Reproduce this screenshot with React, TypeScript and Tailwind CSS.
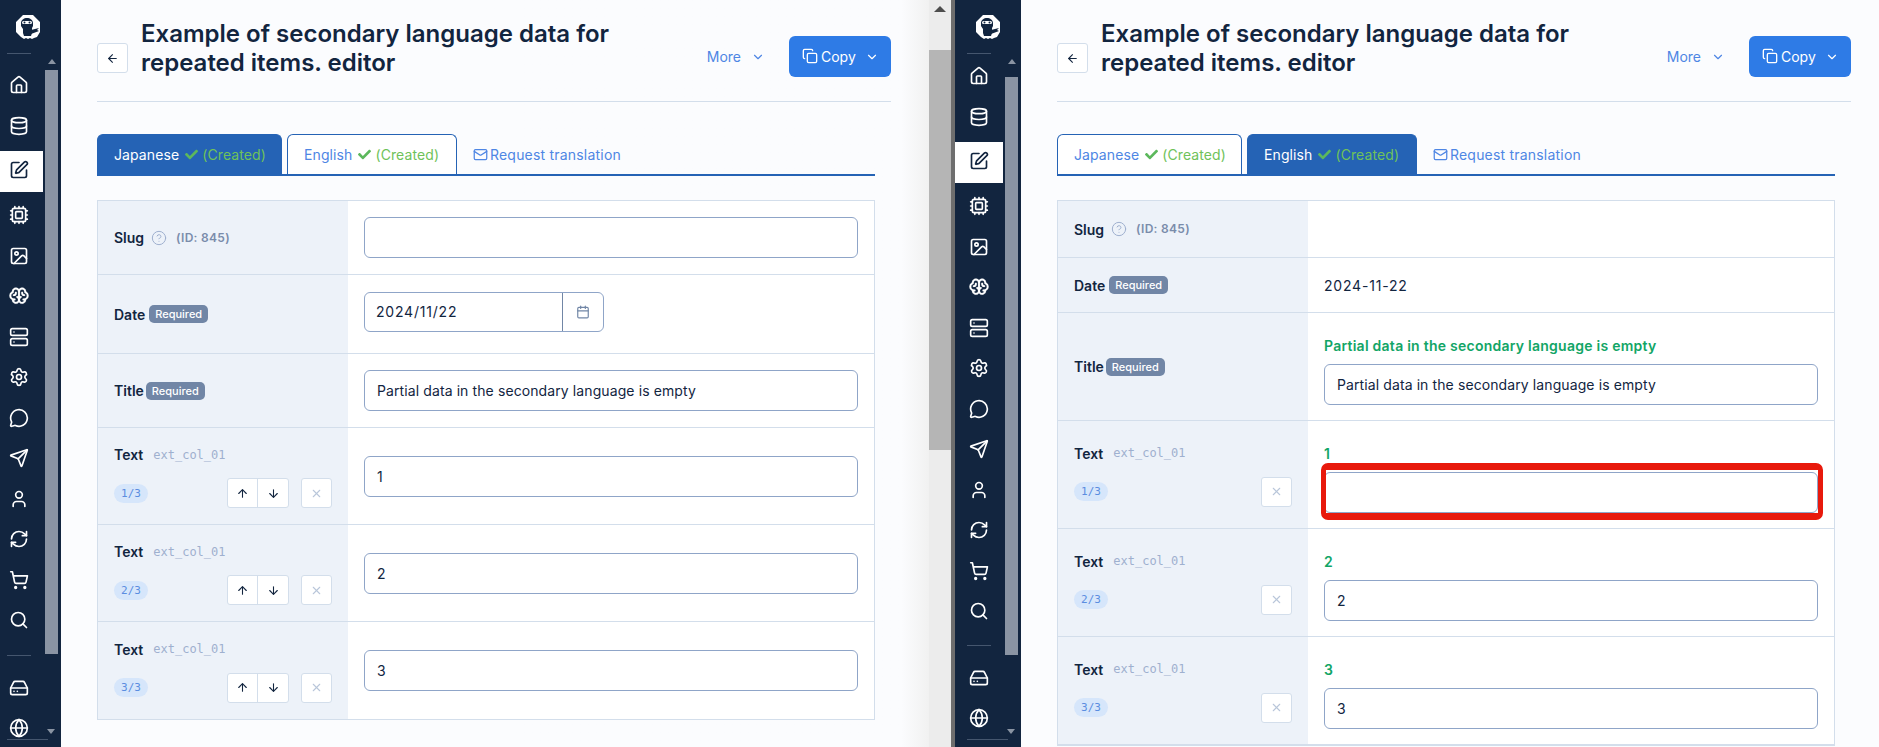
import { ArrowDown, ArrowLeft, ArrowUp, Calendar, ChevronDown, CircleHelp, Copy, Cpu, Database, Globe, HardDrive, House, Image, Mail, MessageCircle, RefreshCw, Search, Send, Server, Settings, ShoppingCart, SquarePen, User, X } from "lucide-react";
import { FaCheck } from "react-icons/fa";
import { PiBrainBold } from "react-icons/pi";
import type { ReactNode } from "react";

const navIcons = [House, Database, SquarePen, Cpu, Image, PiBrainBold, Server, Settings, MessageCircle, Send, User, RefreshCw, ShoppingCart, Search];

function Logo() {
  return (
    <svg viewBox="0 0 24 24" className="h-6 w-6">
      <path d="M7 0h10l7 7v10l-3 5-3 1-2 1-2-1-2 1-2-1-2 1-3-2-5-5V7z" fill="#fff" />
      <path d="M5 8c0-3 3-5 6-5s6 2 6 5v3l-1 2v5l-1 3H8l-1-3v-4l-2-3z" fill="#12253f" />
      <rect x="6" y="6" width="10" height="3" rx="1.5" fill="#fff" />
      <circle cx="8.5" cy="7.5" r="1" fill="#12253f" />
      <circle cx="13.5" cy="7.5" r="1" fill="#12253f" />
      <path d="M15 15l8-2-2 2 2 1-8 3z" fill="#12253f" />
    </svg>
  );
}

function Sidebar({ wide, active }: { wide: boolean; active: number }) {
  return (
    <div className={`flex h-full shrink-0 flex-col bg-[#12253f] ${wide ? "w-[66px]" : "w-[61px]"}`}>
      <div className="flex h-[54px] shrink-0 flex-col">
        <div className={`flex h-[53px] items-center ${wide ? "pl-[21px]" : "pl-[16px]"}`}>
          <Logo />
        </div>
        <div className={`h-px w-6 bg-[#45566e] ${wide ? "ml-3" : "ml-[7px]"}`} />
      </div>
      <div className="flex h-[601px] shrink-0">
        <div className={`flex flex-col overflow-hidden ${wide ? "w-[48px] pt-[2px]" : "w-[43px] pt-[11px]"}`}>
          {navIcons.map((Icon, i) => (
            <div
              key={i}
              className={`flex shrink-0 items-center justify-center ${i === active ? "mt-[5px] mb-[3px] h-[41px] bg-white pb-[3px] text-[#12253f]" : "h-[40.5px] text-white"} ${wide ? "pl-0" : "pr-[5px]"}`}
            >
              <Icon size={20} strokeWidth={2} />
            </div>
          ))}
        </div>
        <div className="ml-[2px] flex w-[13px] flex-col items-center">
          <div className="mt-[5px] h-0 w-0 border-x-[4px] border-b-[5px] border-x-transparent border-b-[#8a94a3]" />
          <div className={`w-full bg-[#8a94a3] ${wide ? "mt-[13px] h-[584px]" : "mt-[6px] h-[584px]"}`} />
        </div>
      </div>
      <div className="relative flex flex-1 flex-col">
        <div className={`h-px w-6 bg-[#45566e] ${wide ? "ml-3 -mt-[10px]" : "ml-[7px]"}`} />
        <div className={`flex h-[40px] items-center justify-center ${wide ? "mt-[12px] w-[48px]" : "mt-[12px] w-[38px]"}`}>
          <HardDrive size={20} className="text-white" />
        </div>
        <div className={`flex h-[40px] items-center justify-center ${wide ? "w-[48px]" : "w-[38px]"}`}>
          <Globe size={20} className="text-white" />
        </div>
        <div className={`absolute h-0 w-0 border-x-[4px] border-t-[5px] border-x-transparent border-t-[#8a94a3] ${wide ? "left-[52px]" : "left-[47px]"} top-[74px]`} />
        <div className={`absolute top-[84px] h-px w-[41px] bg-[#45566e] ${wide ? "left-3" : "left-[7px]"}`} />
      </div>
    </div>
  );
}

function Badge({ gap = "ml-[4px]" }: { gap?: string }) {
  return <span className={`rounded-[5px] bg-[#7186a6] px-[6px] py-[2px] text-[11px] leading-[14px] font-medium text-white ${gap}`}>Required</span>;
}

function Label({ name, children }: { name: string; children?: ReactNode }) {
  return (
    <div className="flex items-center">
      <span className="text-[14px] font-semibold text-[#12253f]">{name}</span>
      {children}
    </div>
  );
}

function Input({ value = "", className = "h-[41px]" }: { value?: string; className?: string }) {
  return (
    <div className={`flex w-full items-center rounded-md border border-[#8fa5c8] bg-white px-[12px] text-[14px] tracking-[0.1px] text-[#12253f] ${className}`}>
      {value}
    </div>
  );
}

function Row({ height, last, left, children }: { height: string; last?: boolean; left: ReactNode; children: ReactNode }) {
  return (
    <div className={`flex ${height} ${last ? "" : "border-b border-[#d3deeb]"}`}>
      <div className="flex w-[250px] shrink-0 flex-col justify-center bg-[#edf2f9] px-4">{left}</div>
      <div className="flex min-w-0 flex-1 flex-col justify-center bg-white pr-[16px] pl-4">{children}</div>
    </div>
  );
}

function TextLeft({ index, arrows }: { index: number; arrows: boolean }) {
  return (
    <>
      <div className="flex items-center">
        <span className="text-[14px] font-semibold text-[#12253f]">Text</span>
        <span className="ml-[10px] font-['DejaVu_Sans_Mono',monospace] text-[12px] text-[#9fb0cf]">ext_col_01</span>
      </div>
      <div className="mt-[13px] flex items-center">
        <span className="rounded-full bg-[#d6e6fb] px-[7px] py-[2px] font-['DejaVu_Sans_Mono',monospace] text-[11px] leading-[15px] text-[#5b8de0]">{index}/3</span>
        {arrows && (
          <div className="ml-auto flex h-[30px] rounded-[3px] border border-[#d3deeb] bg-white">
            <div className="flex w-[30px] items-center justify-center border-r border-[#d3deeb]"><ArrowUp size={13} className="text-[#12253f]" /></div>
            <div className="flex w-[30px] items-center justify-center"><ArrowDown size={13} className="text-[#12253f]" /></div>
          </div>
        )}
        <div className={`flex h-[30px] w-[31px] items-center justify-center rounded-[3px] border border-[#d3deeb] bg-white ${arrows ? "ml-3" : "ml-auto"}`}>
          <X size={13} className="text-[#b9c6da]" />
        </div>
      </div>
    </>
  );
}

function Tab({ name, active, width }: { name: string; active: boolean; width: string }) {
  return (
    <div className={`flex h-[40px] items-center rounded-t-md border border-b-0 border-[#2563b5] pl-4 text-[14px] tracking-[0.1px] ${width} ${active ? "bg-[#2563b5] text-white" : "bg-white text-[#4e86e4]"}`}>
      {name}
      <FaCheck size={13} className="mr-[4px] ml-[6px] text-[#5cb85c]" />
      <span className="text-[#6fc25a]">(Created)</span>
    </div>
  );
}

function Header() {
  return (
    <div className="flex h-[102px] items-center border-b border-[#d3deeb]">
      <div className="flex h-full w-full items-center pb-[8px]">
        <div className="mt-[23px] flex h-[30px] w-[31px] shrink-0 items-center justify-center rounded-[3px] border border-[#d3deeb] bg-white">
          <ArrowLeft size={13} className="text-[#12253f]" />
        </div>
        <h1 className="mt-[2px] ml-[13px] w-[490px] text-[24px] leading-[29px] font-semibold text-[#12253f]">Example of secondary language data for repeated items. editor</h1>
        <div className="mt-[19px] ml-auto flex items-center text-[14px] text-[#4e86e4]">
          More
          <ChevronDown size={14} className="mt-[2px] ml-[10px]" />
        </div>
        <div className="mt-[19px] ml-[24px] flex h-[41px] w-[102px] items-center rounded-md bg-[#2e7be6] pl-[13px] text-[14px] text-white">
          <Copy size={16} className="mr-[3px]" />
          Copy
          <ChevronDown size={14} className="mt-[2px] ml-[9px]" />
        </div>
      </div>
    </div>
  );
}

function Tabs({ active }: { active: "ja" | "en" }) {
  return (
    <div className="mt-[32px] flex items-end gap-[5px] border-b-2 border-[#2563b5]">
      <Tab name="Japanese" active={active === "ja"} width="w-[185px]" />
      <Tab name="English" active={active === "en"} width="w-[170px]" />
      <div className="ml-[11px] flex h-[40px] items-center text-[14px] tracking-[0.2px] text-[#4e86e4]">
        <Mail size={15} className="mr-[2px]" />
        Request translation
      </div>
    </div>
  );
}

function SlugLabel() {
  return (
    <div className="flex items-center">
      <span className="text-[14px] font-semibold text-[#12253f]">Slug</span>
      <CircleHelp size={16} strokeWidth={1.5} className="ml-[7px] text-[#9fb0cf]" />
      <span className="ml-[9px] text-[12px] font-semibold tracking-[0.3px] text-[#7a8cab]">(ID: 845)</span>
    </div>
  );
}

function LeftPane() {
  return (
    <div className="flex h-full w-[929px] shrink-0 bg-gradient-to-r from-[#fbfcfe] from-[97%] to-[#f1f1f1]">
      <Sidebar wide={false} active={2} />
      <div className="ml-9 w-[794px]">
        <Header />
        <div className="w-[778px]">
          <Tabs active="ja" />
          <div className="mt-[24px] border border-[#d3deeb]">
            <Row height="h-[74px]" left={<SlugLabel />}><Input /></Row>
            <Row height="h-[79px]" left={<Label name="Date"><Badge /></Label>}>
              <div className="mb-[5px] flex h-[40px] w-[240px] rounded-md border border-[#8fa5c8] bg-white text-[14px] tracking-[0.8px] text-[#12253f]">
                <div className="flex w-[198px] items-center border-r border-[#7186a6] px-[11px]">2024/11/22</div>
                <div className="flex flex-1 items-center justify-center"><Calendar size={14} className="text-[#7186a6]" /></div>
              </div>
            </Row>
            <Row height="h-[74px]" left={<Label name="Title"><Badge gap="ml-[2px]" /></Label>}><Input value="Partial data in the secondary language is empty" /></Row>
            {[1, 2, 3].map((n) => (
              <Row key={n} height="h-[97px]" last={n === 3} left={<TextLeft index={n} arrows />}><Input value={String(n)} /></Row>
            ))}
          </div>
        </div>
      </div>
    </div>
  );
}

function GreenLabel({ text }: { text: string }) {
  return <div className="mb-[8px] text-[14px] leading-[20px] font-semibold tracking-[0.25px] text-[#12a566]">{text}</div>;
}

function RightPane() {
  return (
    <div className="flex h-full min-w-0 flex-1 bg-[#fbfcfe]">
      <Sidebar wide active={2} />
      <div className="ml-9 w-[794px]">
        <Header />
        <div className="w-[778px]">
          <Tabs active="en" />
          <div className="mt-[24px] border border-[#d3deeb]">
            <Row height="h-[57px]" left={<SlugLabel />}><span /></Row>
            <Row height="h-[55px]" left={<Label name="Date"><Badge /></Label>}><span className="text-[14px] tracking-[0.8px] text-[#12253f]">2024-11-22</span></Row>
            <Row height="h-[108px]" left={<Label name="Title"><Badge gap="ml-[2px]" /></Label>}>
              <div className="pt-[8px]">
                <GreenLabel text="Partial data in the secondary language is empty" />
                <Input value="Partial data in the secondary language is empty" />
              </div>
            </Row>
            {[1, 2, 3].map((n) => (
              <Row key={n} height="h-[108px]" left={<TextLeft index={n} arrows={false} />}>
                <div className="pt-[8px]">
                  <GreenLabel text={String(n)} />
                  <div className="relative">
                    <Input value={n === 1 ? "" : String(n)} />
                    {n === 1 && <div className="absolute -top-[9px] -right-[5px] -bottom-[7px] -left-[3px] rounded-[7px] border-x-[5px] border-y-[7px] border-[#e8190c]" />}
                  </div>
                </div>
              </Row>
            ))}
          </div>
        </div>
      </div>
    </div>
  );
}

function WindowScrollbar() {
  return (
    <div className="flex h-full shrink-0">
      <div className="flex w-[22px] flex-col items-center bg-[#ececec]">
        <div className="mt-[6px] h-0 w-0 border-x-[6px] border-b-[6px] border-x-transparent border-b-[#4d4d4d]" />
        <div className="mt-[38px] h-[400px] w-full bg-[#b5b5b5]" />
      </div>
      <div className="w-[4px] bg-[#6e6e6e]" />
    </div>
  );
}

export default function App() {
  return (
    <div className="flex h-[747px] w-[1879px] overflow-hidden font-['Inter',sans-serif]">
      <LeftPane />
      <WindowScrollbar />
      <RightPane />
    </div>
  );
}
